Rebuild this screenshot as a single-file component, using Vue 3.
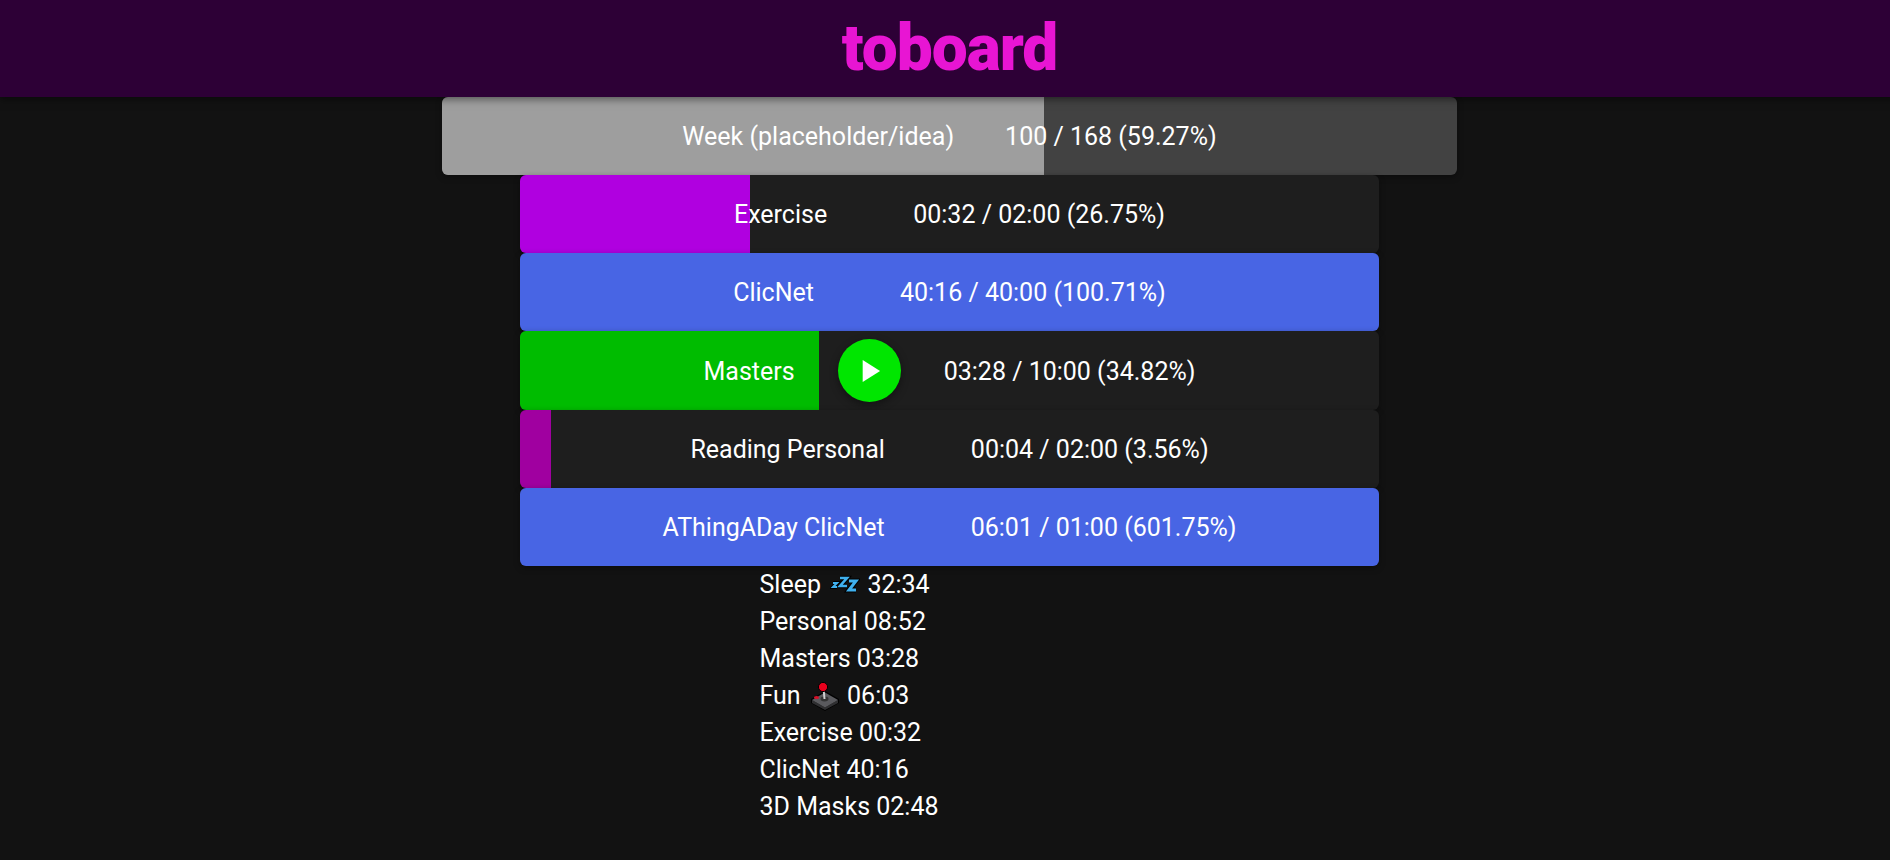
<template>
  <div class="page">
    <header class="topbar">
      <h1>toboard</h1>
    </header>

    <main class="board">
      <div class="row week">
        <div class="fill" style="width: 59.27%; background: #9e9e9e"></div>
        <span class="label">Week (placeholder/idea)</span>
        <span class="value">100 / 168 (59.27%)</span>
      </div>

      <div v-for="goal in goals" :key="goal.name" class="row goal" :class="{ running: goal.playing }">
        <div class="fill" :style="{ width: Math.min(goal.percent, 100) + '%', background: goal.color }"></div>
        <span class="label">{{ goal.name }}</span>
        <button v-if="goal.playing" class="play" aria-label="Play">
          <svg viewBox="0 0 24 24" width="38" height="38"><path fill="#fff" d="M8 5v14l11-7z" /></svg>
        </button>
        <span class="value">{{ goal.done }} / {{ goal.total }} ({{ goal.percent }}%)</span>
      </div>

      <ul class="totals">
        <li>Sleep
          <svg class="emoji zzz" viewBox="0 0 30 20" width="30" height="20">
            <g fill="none" stroke="#000">
              <path stroke-width="4" d="M3 9h4l-4 4h4" />
              <path stroke-width="4.6" d="M10 4h7l-7 8h7" />
              <path stroke-width="5" d="M19 7h7l-7 9h7" />
            </g>
            <g fill="none" stroke="#3fb0ee">
              <path stroke-width="2" d="M3 9h4l-4 4h4" />
              <path stroke-width="2.6" d="M10 4h7l-7 8h7" />
              <path stroke-width="3" d="M19 7h7l-7 9h7" />
            </g>
          </svg>
          32:34</li>
        <li>Personal 08:52</li>
        <li>Masters 03:28</li>
        <li>Fun
          <svg class="emoji stick" viewBox="0 0 28 30" width="28" height="30">
            <path fill="#000" d="M14 10L28 18v4L14 30 0 22v-4z" />
            <path fill="#2f2f31" d="M14 26.5l13-7.5v3l-13 7-13-7v-3z" />
            <path fill="#5a5a5e" d="M14 11.5L27 19l-13 7.5L1 19z" />
            <ellipse cx="13.5" cy="18" rx="4" ry="2.4" fill="#333" />
            <path stroke="#cfcfcf" stroke-width="2" d="M12.5 7l1 11" />
            <circle cx="12" cy="6" r="4.6" fill="#e8001c" stroke="#000" stroke-width="1" />
            <ellipse cx="5.5" cy="16.5" rx="2.6" ry="1.6" fill="#d8112a" />
          </svg>
          06:03</li>
        <li>Exercise 00:32</li>
        <li>ClicNet 40:16</li>
        <li>3D Masks 02:48</li>
      </ul>
    </main>
  </div>
</template>

<script setup>
const goals = [
  { name: 'Exercise', done: '00:32', total: '02:00', percent: 26.75, color: '#b000e0' },
  { name: 'ClicNet', done: '40:16', total: '40:00', percent: 100.71, color: '#4865e4' },
  { name: 'Masters', done: '03:28', total: '10:00', percent: 34.82, color: '#00bc00', playing: true },
  { name: 'Reading Personal', done: '00:04', total: '02:00', percent: 3.56, color: '#a000a0' },
  { name: 'AThingADay ClicNet', done: '06:01', total: '01:00', percent: 601.75, color: '#4865e4' },
]
</script>

<style>
html, body {
  margin: 0;
  background: #fff;
  overflow: hidden;
}
</style>

<style scoped>
.page {
  width: 1899px;
  height: 860px;
  background: #121212;
  color: #fff;
  font-family: Roboto, sans-serif;
  font-size: 25px;
}

.topbar {
  position: relative;
  z-index: 2;
  height: 97px;
  display: flex;
  align-items: center;
  justify-content: center;
  background: #2d0036;
  box-shadow: 0 2px 8px rgba(0, 0, 0, 0.5);
}

.topbar h1 {
  margin: 0;
  color: #e815d3;
  font-size: 64px;
  font-weight: 900;
  letter-spacing: -1px;
}

.board {
  display: flex;
  flex-direction: column;
  align-items: center;
}

.row {
  position: relative;
  display: flex;
  align-items: center;
  justify-content: center;
  height: 78px;
  border-radius: 6px;
  overflow: hidden;
  background: #1e1e1e;
  box-shadow: 0 2px 6px rgba(0, 0, 0, 0.35);
}

.week {
  width: 1015px;
  column-gap: 51px;
  background: #424242;
}

.goal {
  width: 859px;
  column-gap: 43px;
}

.goal.running {
  height: 79px;
}

.goal:not(.running) .value {
  margin-left: 43px;
}

.fill {
  position: absolute;
  top: 0;
  left: 0;
  bottom: 0;
}

.label,
.value {
  position: relative;
  padding-top: 1px;
}

.play {
  position: relative;
  width: 63px;
  height: 63px;
  padding: 0;
  border: none;
  border-radius: 50%;
  background: #00e600;
  display: flex;
  align-items: center;
  justify-content: center;
  box-shadow: 0 3px 8px rgba(0, 0, 0, 0.4);
}

.totals {
  list-style: none;
  margin: 0;
  padding: 0;
  width: 380px;
}

.totals li {
  height: 37px;
  line-height: 37px;
  white-space: nowrap;
}

.emoji {
  vertical-align: middle;
}

.zzz {
  margin: 0 1px 0 3px;
  transform: translateY(-2px);
}

.stick {
  margin: 0 2px 0 4px;
  transform: translateY(-1px);
}
</style>
